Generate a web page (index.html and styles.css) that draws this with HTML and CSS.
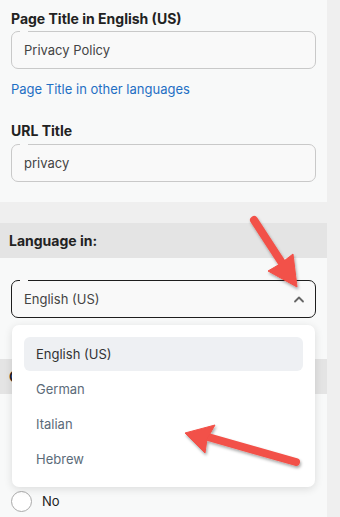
FILE: index.html
```html
<!DOCTYPE html>
<html lang="en">
  <head>
    <meta charset="UTF-8" />
    <title>Page Settings</title>
    <link rel="stylesheet" href="styles.css">
  </head>
  <body>
    <div class="page">
      <div class="card">
        <label class="field-label">Page Title in English (US)</label>
        <div class="text-input">Privacy Policy</div>
        <a class="link" href="#">Page Title in other languages</a>
        <label class="field-label second">URL Title</label>
        <div class="text-input">privacy</div>
      </div>

      <div class="section-head">Language in:</div>
      <div class="section-body">
        <div class="select-wrap">
          <div class="select">
            <span>English (US)</span>
            <svg class="chevron" width="12" height="8" viewBox="0 0 12 8">
              <path d="M2 6.5 L6 2.5 L10 6.5" fill="none" stroke="#666" stroke-width="1.8" stroke-linecap="round" stroke-linejoin="round" />
            </svg>
          </div>
          <div class="dropdown">
            <div class="option active">English (US)</div>
            <div class="option">German</div>
            <div class="option">Italian</div>
            <div class="option">Hebrew</div>
          </div>
        </div>
      </div>

      <div class="section-head">Cache this page:</div>
      <div class="section-body radios">
        <div class="radio-row"><span class="radio"></span>No</div>
      </div>
    </div>

    <svg class="arrows" width="340" height="517" viewBox="0 0 340 517">
      <g fill="#f25148" stroke="#f25148" filter="url(#shadow)">
        <line x1="254" y1="220" x2="282" y2="263" stroke-width="8" stroke-linecap="round" />
        <polygon points="297,287 268,271 280,264 293,254" stroke-width="1" stroke-linejoin="round" />
        <line x1="296" y1="462" x2="208" y2="437" stroke-width="8" stroke-linecap="round" />
        <polygon points="185,433 215,425 207,439 205,453" stroke-width="1" stroke-linejoin="round" />
      </g>
      <defs>
        <filter id="shadow" x="-20%" y="-20%" width="140%" height="140%">
          <feDropShadow dx="1" dy="2" stdDeviation="1.6" flood-color="#000" flood-opacity="0.35" />
        </filter>
      </defs>
    </svg>
  </body>
</html>
```

FILE: styles.css
```css
body {
  margin: 0;
  background: #efefef;
  font-family: Inter, "Noto Sans", sans-serif;
  font-size: 13px;
  color: #222;
  position: relative;
  height: 517px;
  overflow: hidden;
}
.page {
  width: 327px;
}
.card {
  background: #f8f9f9;
  padding: 10px 11px 20px;
}
.field-label {
  display: block;
  font-size: 14px;
  font-weight: 700;
  line-height: 17px;
  margin-bottom: 4px;
}
.field-label.second {
  margin-top: 24px;
  margin-bottom: 5px;
}
.text-input,
.select {
  position: relative;
  height: 38px;
  box-sizing: border-box;
  border: 1px solid #c9c9c9;
  border-radius: 7px;
  padding: 0 12px;
  display: flex;
  align-items: center;
  color: #444;
  background: #f9f9f9;
}
.text-input::before,
.select::before {
  content: "";
  position: absolute;
  left: 8px;
  top: -2px;
  width: 8px;
  height: 3px;
  background: #f9f9f9;
}
.link {
  display: block;
  margin-top: 12px;
  line-height: 17px;
  color: #1f6fc4;
  text-decoration: none;
}
.section-head {
  margin-top: 21px;
  height: 35px;
  background: #e4e4e4;
  padding-left: 9px;
  display: flex;
  align-items: center;
  font-size: 14px;
  font-weight: 700;
}
.section-head + .section-body + .section-head {
  margin-top: 0;
}
.section-body {
  background: #f8f9f9;
  padding: 22px 11px 41px;
}
.select-wrap {
  position: relative;
}
.select {
  border: 1.5px solid #1e1e1e;
  justify-content: space-between;
  padding-right: 10px;
}
.dropdown {
  position: absolute;
  top: calc(100% + 7px);
  left: 1px;
  right: 1px;
  background: #fff;
  border-radius: 7px;
  box-shadow: 0 2px 8px rgba(0, 0, 0, 0.12);
  padding: 12px 12px 11px;
  display: flex;
  flex-direction: column;
  gap: 1px;
  z-index: 2;
}
.option {
  height: 34px;
  display: flex;
  align-items: center;
  padding-left: 12px;
  border-radius: 6px;
  color: #5b6b79;
}
.option.active {
  background: #eef0f3;
  color: #333;
}
.radios {
  padding: 97px 11px 10px;
}
.radio-row {
  display: flex;
  align-items: center;
  gap: 10px;
  height: 20px;
}
.radio {
  width: 19px;
  height: 19px;
  border: 1px solid #a9a9a9;
  border-radius: 50%;
  background: #fff;
}
.arrows {
  position: absolute;
  top: 0;
  left: 0;
  z-index: 5;
  pointer-events: none;
}
```
